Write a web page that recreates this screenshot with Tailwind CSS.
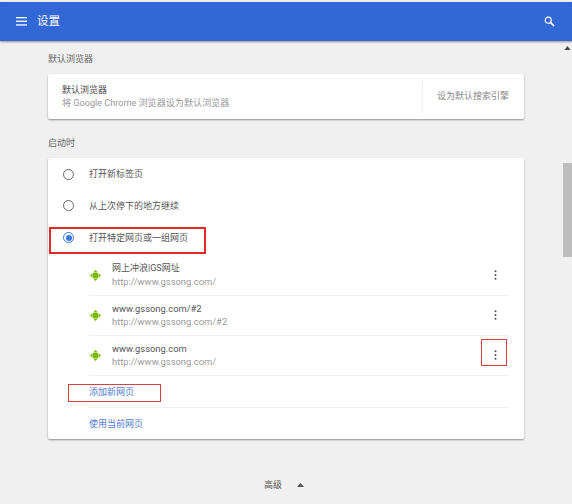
<!DOCTYPE html>
<html lang="zh-CN">
<head>
    <meta charset="UTF-8">
    <title>设置</title>
    <script src="https://cdn.jsdelivr.net/npm/@tailwindcss/browser@4"></script>
</head>
<body class="bg-[#f0f0f0] h-[504px] overflow-hidden font-['Roboto','Noto_Sans_CJK_SC',sans-serif] text-[9px] text-[#555]">
    <div class="relative h-[504px] overflow-hidden">
        <!-- Header -->
        <header class="h-[39px] mt-[2px] bg-[#3367d6] shadow-[0_1px_2px_rgba(0,0,0,0.4)] flex items-center justify-between pl-[16px] pr-[17px] text-white">
            <div class="flex items-center gap-[10px]">
                <svg width="11" height="9" viewBox="0 0 11 9" fill="#fff"><rect width="11" height="1.3"/><rect y="3.6" width="11" height="1.3"/><rect y="7.3" width="11" height="1.3"/></svg>
                <span class="text-[11.5px]">设置</span>
            </div>
            <svg width="11" height="11" viewBox="0 0 12 12" fill="none" stroke="#fff"><circle cx="4.6" cy="4.6" r="3.3" stroke-width="1.3"/><path d="M7 7l4 4" stroke-width="1.7"/></svg>
        </header>

        <main class="w-[476px] ml-[48px]">
            <h2 class="mt-[12px] h-[12px] leading-[12px] text-[#666]">默认浏览器</h2>
            <section class="mt-[9px] h-[45px] bg-white rounded-[2px] shadow-[0_1px_2px_rgba(0,0,0,0.4)] flex items-center">
                <div class="flex-1 pl-[14px]">
                    <div class="pt-[1px] leading-[13px] text-[#444]">默认浏览器</div>
                    <div class="leading-[13px] text-[9.1px] text-[#999]">将 Google Chrome 浏览器设为默认浏览器</div>
                </div>
                <div class="h-[32px] w-[1px] bg-[#eee]"></div>
                <div class="w-[101px] pl-[14px] text-[#888]">设为默认搜索引擎</div>
            </section>

            <h2 class="mt-[18px] h-[12px] leading-[12px] text-[#666]">启动时</h2>
            <section class="mt-[9px] h-[281px] bg-white rounded-[2px] shadow-[0_1px_2px_rgba(0,0,0,0.4)]">
                <div class="h-[32px] flex items-center pl-[15px] gap-[15px]">
                    <span class="w-[11px] h-[11px] rounded-full border-[1.5px] border-[#666]"></span>
                    <span class="pt-[2px]">打开新标签页</span>
                </div>
                <div class="h-[31px] flex items-center pl-[15px] gap-[15px]">
                    <span class="w-[11px] h-[11px] rounded-full border-[1.5px] border-[#666]"></span>
                    <span class="pt-[2px]">从上次停下的地方继续</span>
                </div>
                <div class="h-[33px] flex items-center pl-[15px] gap-[15px]">
                    <span class="w-[11px] h-[11px] rounded-full border-[1.5px] border-[#3b78e7] flex items-center justify-center"><span class="w-[6px] h-[6px] rounded-full bg-[#3b78e7]"></span></span>
                    <span class="pt-[2px]">打开特定网页或一组网页</span>
                </div>

                <div class="ml-[41px] mr-[15px] mt-[2px]">
                    <div class="h-[40px] flex items-center border-b border-[#f0f0f0]">
                        <svg class="ml-[1px]" width="11" height="11" viewBox="0 0 11 11" fill="#76b900"><path d="M5.5 0l2 2h-4zM5.5 11l-2-2h4zM0 5.5l2-2v4zM11 5.5l-2 2v-4z"/><rect x="2.5" y="2.5" width="6" height="6" rx="1.5"/></svg>
                        <div class="ml-[11px] flex-1">
                            <div class="leading-[13px]">网上冲浪|GS网址</div>
                            <div class="leading-[14px] text-[9.4px] text-[#999]">http://www.gssong.com/</div>
                        </div>
                        <svg class="mr-[12px] -translate-y-[1px]" width="3" height="10" viewBox="0 0 3 10" fill="#555"><circle cx="1.5" cy="1.2" r="1"/><circle cx="1.5" cy="5" r="1"/><circle cx="1.5" cy="8.8" r="1"/></svg>
                    </div>
                    <div class="h-[40px] flex items-center border-b border-[#f0f0f0]">
                        <svg class="ml-[1px]" width="11" height="11" viewBox="0 0 11 11" fill="#76b900"><path d="M5.5 0l2 2h-4zM5.5 11l-2-2h4zM0 5.5l2-2v4zM11 5.5l-2 2v-4z"/><rect x="2.5" y="2.5" width="6" height="6" rx="1.5"/></svg>
                        <div class="ml-[11px] flex-1">
                            <div class="leading-[13px] text-[9.4px]">www.gssong.com/#2</div>
                            <div class="leading-[14px] text-[9.4px] text-[#999]">http://www.gssong.com/#2</div>
                        </div>
                        <svg class="mr-[12px] -translate-y-[1px]" width="3" height="10" viewBox="0 0 3 10" fill="#555"><circle cx="1.5" cy="1.2" r="1"/><circle cx="1.5" cy="5" r="1"/><circle cx="1.5" cy="8.8" r="1"/></svg>
                    </div>
                    <div class="h-[40px] flex items-center border-b border-[#f0f0f0]">
                        <svg class="ml-[1px]" width="11" height="11" viewBox="0 0 11 11" fill="#76b900"><path d="M5.5 0l2 2h-4zM5.5 11l-2-2h4zM0 5.5l2-2v4zM11 5.5l-2 2v-4z"/><rect x="2.5" y="2.5" width="6" height="6" rx="1.5"/></svg>
                        <div class="ml-[11px] flex-1">
                            <div class="leading-[13px] text-[9.4px]">www.gssong.com</div>
                            <div class="leading-[14px] text-[9.4px] text-[#999]">http://www.gssong.com/</div>
                        </div>
                        <svg class="mr-[12px] -translate-y-[1px]" width="3" height="10" viewBox="0 0 3 10" fill="#555"><circle cx="1.5" cy="1.2" r="1"/><circle cx="1.5" cy="5" r="1"/><circle cx="1.5" cy="8.8" r="1"/></svg>
                    </div>
                    <div class="h-[32px] flex items-center border-b border-[#f0f0f0] text-[#4f7bcf]"><span class="pt-[2px]">添加新网页</span></div>
                    <div class="h-[32px] flex items-center text-[#4f7bcf]"><span class="pt-[2px]">使用当前网页</span></div>
                </div>
            </section>

            <div class="mt-[38px] pr-[4px] flex items-center justify-center gap-[15px]">
                <span class="pt-[2px]">高级</span>
                <svg width="7" height="4" viewBox="0 0 7 4" fill="#555"><path d="M3.5 0l3.5 4H0z"/></svg>
            </div>
        </main>

        <!-- Scrollbar -->
        <svg class="absolute left-[564px] top-[46px]" width="7" height="4" viewBox="0 0 7 4" fill="#444"><path d="M3.5 0l3 4H.5z"/></svg>
        <div class="absolute left-[563px] top-[163px] w-[9px] h-[94px] bg-[#bdbdbd]"></div>

        <!-- Red annotations -->
        <div class="absolute left-[49px] top-[227px] w-[157px] h-[27px] border-[2px] border-[#e02b2b]"></div>
        <div class="absolute left-[68px] top-[384px] w-[93px] h-[18px] border border-[#d9413f]"></div>
        <div class="absolute left-[481px] top-[339px] w-[26px] h-[27px] border border-[#d9413f]"></div>
    </div>
</body>
</html>
